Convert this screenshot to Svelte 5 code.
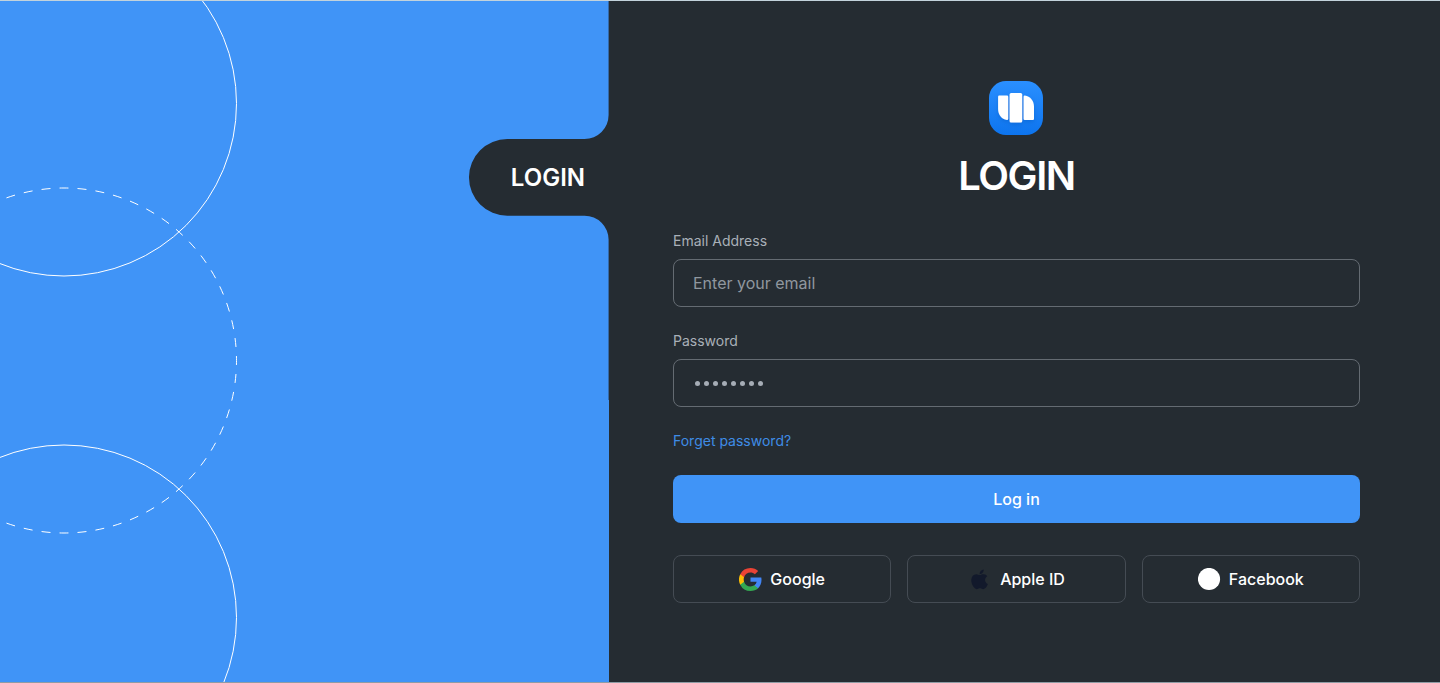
<script>
  const dots = Array.from({ length: 8 });
</script>

<main class="page">
  <aside class="side">
    <svg class="art" width="609" height="681" viewBox="0 1 609 681" fill="none" aria-hidden="true">
      <g stroke="#fff" stroke-width="1">
        <circle cx="64" cy="103.5" r="172.5" />
        <circle cx="64" cy="360.5" r="172.5" pathLength="1080" stroke-dasharray="9 9" stroke-dashoffset="4.5" />
        <circle cx="64" cy="617.5" r="172.5" />
      </g>
      <path
        fill="#252c32"
        d="M608.600 1V115A24 24 0 0 1 584.600 139H507.300A38.300 38.300 0 0 0 507.300 215.700H584.600A24 24 0 0 1 608.600 239.700V400H609V1Z"
      />
    </svg>
    <span class="tab">LOGIN</span>
  </aside>

  <section class="panel">
    <form class="form" onsubmit={(e) => e.preventDefault()}>
      <svg class="logo" width="55" height="54" viewBox="0 0 55 54">
        <defs>
          <linearGradient id="tile" x1="0" y1="0" x2="0" y2="1">
            <stop offset="0" stop-color="#2a8fff" />
            <stop offset="1" stop-color="#0d74ee" />
          </linearGradient>
          <filter id="shade" x="-30%" y="-30%" width="160%" height="170%">
            <feDropShadow dx="0" dy="2" stdDeviation="2" flood-color="#0a4fb0" flood-opacity=".35" />
          </filter>
        </defs>
        <rect width="54" height="54" rx="17" fill="url(#tile)" />
        <g fill="#fff" filter="url(#shade)">
          <path d="M10.300 14.600H18a1.200 1.200 0 0 1 1.200 1.200V37.800A1.200 1.200 0 0 1 18 39C12.600 38.300 9.100 33.500 9.100 28V15.800a1.200 1.200 0 0 1 1.200-1.200Z" />
          <rect x="20.600" y="12" width="12.600" height="29.500" rx="1.500" />
          <path d="M35.800 14.600C41.300 15.300 45 20 45 25.500V37.800A1.200 1.200 0 0 1 43.800 39H35.800A1.200 1.200 0 0 1 34.600 37.800V15.800a1.200 1.200 0 0 1 1.200-1.200Z" />
        </g>
      </svg>
      <h1>LOGIN</h1>

      <div class="field">
        <label for="email">Email Address</label>
        <input id="email" type="email" placeholder="Enter your email" />
      </div>

      <div class="field">
        <span class="label">Password</span>
        <div class="box">
          {#each dots as _}
            <i class="dot"></i>
          {/each}
        </div>
      </div>

      <a class="forgot" href="#forgot">Forget password?</a>
      <button class="submit" type="submit">Log in</button>

      <div class="social">
        <button type="button" class="google">
          <svg width="23" height="23" viewBox="0 0 24 24">
            <path fill="#4285f4" d="M23.500 12.270c0-.85-.08-1.660-.22-2.450H12v4.640h6.450a5.520 5.520 0 0 1-2.390 3.620v3h3.870c2.260-2.090 3.570-5.160 3.570-8.810Z" />
            <path fill="#34a853" d="M12 24c3.240 0 5.950-1.070 7.930-2.910l-3.870-3c-1.080.72-2.450 1.150-4.060 1.150-3.130 0-5.780-2.110-6.720-4.950h-4v3.090A12 12 0 0 0 12 24Z" />
            <path fill="#fbbc05" d="M5.280 14.290a7.200 7.200 0 0 1 0-4.580V6.620h-4a12 12 0 0 0 0 10.760l4-3.090Z" />
            <path fill="#ea4335" d="M12 4.760c1.760 0 3.340.61 4.590 1.800l3.430-3.430C17.950 1.190 15.240 0 12 0A12 12 0 0 0 1.280 6.620l4 3.090C6.220 6.870 8.870 4.760 12 4.760Z" />
          </svg>
          <span>Google</span>
        </button>
        <button type="button" class="apple">
          <svg width="24" height="24" viewBox="1.400 0.700 22 22" fill="#12192b">
            <path d="M17.050 20.280c-.98.95-2.050.8-3.080.35-1.090-.46-2.090-.48-3.240 0-1.440.62-2.200.44-3.060-.35C2.790 15.250 3.510 7.590 9.050 7.310c1.350.07 2.290.74 3.080.8 1.180-.24 2.310-.93 3.570-.84 1.510.12 2.650.72 3.400 1.800-3.120 1.870-2.380 5.980.48 7.130-.57 1.500-1.310 2.990-2.530 4.090ZM12.030 7.250c-.15-2.230 1.660-4.070 3.740-4.250.29 2.580-2.340 4.500-3.740 4.250Z" />
          </svg>
          <span>Apple ID</span>
        </button>
        <button type="button" class="facebook">
          <svg width="23" height="23" viewBox="0 0 23 23" fill="#fff">
            <circle cx="11" cy="11" r="11.100" />
          </svg>
          <span>Facebook</span>
        </button>
      </div>
    </form>
  </section>
</main>

<style>
  :global(body) {
    margin: 0;
    background: #252c32;
  }
  .page {
    box-sizing: border-box;
    display: flex;
    width: 1440px;
    height: 683px;
    overflow: hidden;
    background: #252c32;
    border-top: 1px solid #c3d3dc;
    border-bottom: 1px solid #8f9ca5;
    font-family: Inter, "Liberation Sans", sans-serif;
    color: #fff;
  }
  .side {
    position: relative;
    flex: 0 0 609px;
    background: #4094f7;
  }
  .art {
    display: block;
  }
  .tab {
    position: absolute;
    right: 24px;
    top: 162px;
    font-size: 24px;
    line-height: 30px;
    font-weight: 600;
  }
  .panel {
    flex: 1;
    padding: 80px 80px 0 64px;
  }
  .form {
    display: flex;
    flex-direction: column;
  }
  .logo {
    display: block;
    align-self: center;
    overflow: visible;
  }
  h1 {
    margin: 17px 0 31px;
    font-size: 40px;
    line-height: 48px;
    font-weight: 600;
    text-align: center;
    letter-spacing: -0.035em;
  }
  .field {
    display: flex;
    flex-direction: column;
    gap: 8px;
    margin-bottom: 24px;
  }
  label,
  .label {
    font-size: 14px;
    line-height: 20px;
    color: #a9b0b8;
  }
  input,
  .box {
    box-sizing: border-box;
    width: 687px;
    height: 48px;
    padding: 0 19px;
    border: 1px solid #646b72;
    border-radius: 8px;
    background: transparent;
    font: 400 16px/24px Inter, sans-serif;
    color: #fff;
    outline: none;
  }
  input::placeholder {
    color: #90979f;
    opacity: 1;
  }
  .box {
    display: flex;
    align-items: center;
    gap: 4px;
    padding: 1px 21px 0;
  }
  .dot {
    width: 5px;
    height: 5px;
    border-radius: 50%;
    background: #a6adb6;
  }
  .forgot {
    font-size: 14px;
    line-height: 20px;
    color: #3f8ce6;
    text-decoration: none;
  }
  button {
    box-sizing: border-box;
    height: 48px;
    padding: 0;
    border-radius: 8px;
    font: 500 16px/24px Inter, sans-serif;
    color: #fff;
  }
  .submit {
    margin: 24px 0 32px;
    border: 0;
    background: #4094f7;
  }
  .social {
    display: grid;
    grid-template-columns: repeat(3, 1fr);
    gap: 16px;
  }
  .social button {
    display: flex;
    align-items: center;
    justify-content: center;
    gap: 8px;
    border: 1px solid #454c54;
    background: transparent;
  }
</style>
